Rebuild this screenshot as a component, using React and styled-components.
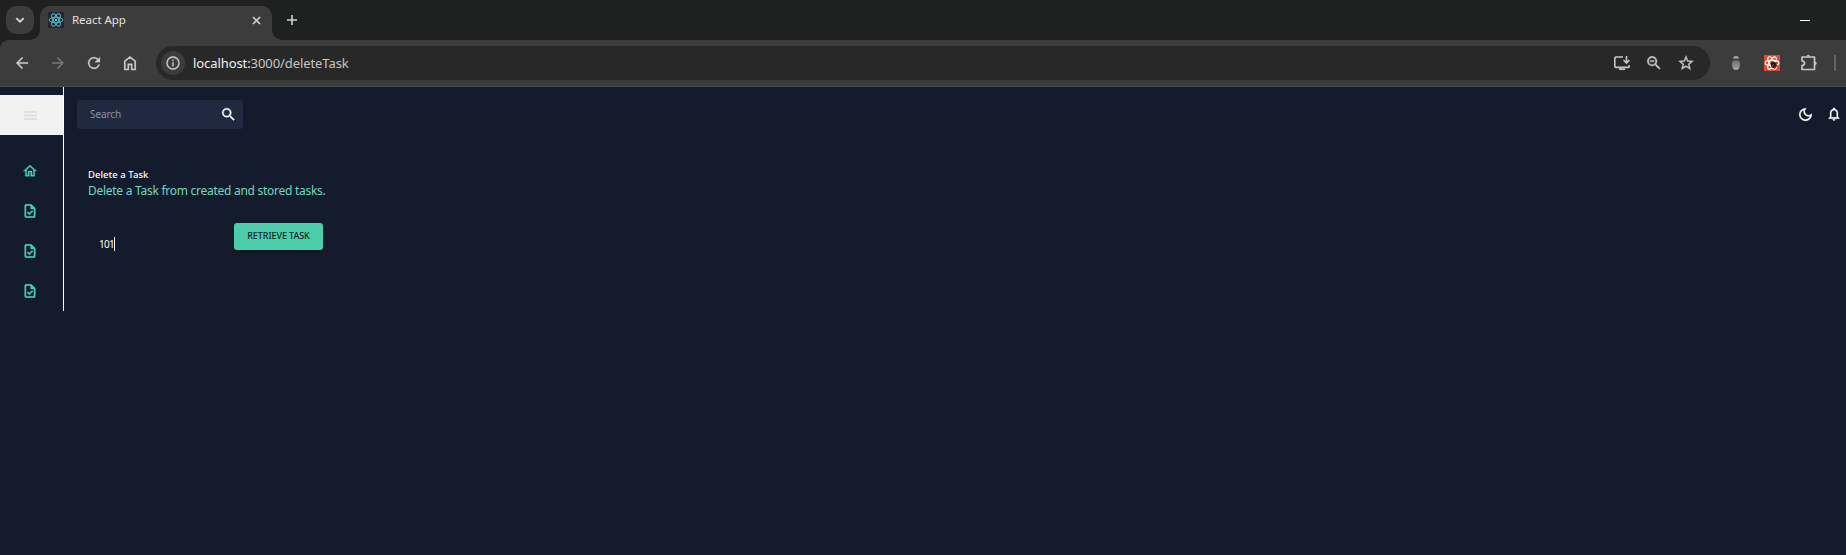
import React from 'react';
import styled, { createGlobalStyle } from 'styled-components';

const Global = createGlobalStyle`
  *, *::before, *::after { box-sizing: border-box; }
  html, body { margin: 0; background: #141b2d; }
  body { font-family: "Noto Sans", "Open Sans", sans-serif; overflow: hidden; }
  svg { display: block; flex: none; }
`;

const Window = styled.div`
  width: 1846px;
  height: 555px;
  display: flex;
  flex-direction: column;
  background: #141b2d;
`;

const TabStrip = styled.header`
  height: 40px;
  flex: none;
  display: flex;
  align-items: flex-start;
  padding: 6px 36px 0 6px;
  background: #1f2120;
`;

const TabSearch = styled.div`
  width: 28px;
  height: 28px;
  border-radius: 10px;
  background: #3c3c3c;
  display: grid;
  place-items: center;
  color: #e3e3e3;
`;

const Tab = styled.div`
  position: relative;
  width: 232px;
  height: 34px;
  margin-left: 6px;
  padding: 0 9px 6px 8px;
  display: flex;
  align-items: center;
  border-radius: 10px 10px 0 0;
  background: #3c3c3c;
  color: #e3e3e3;
  &::before, &::after {
    content: "";
    position: absolute;
    bottom: 0;
    width: 10px;
    height: 10px;
  }
  &::before { left: -10px; background: radial-gradient(circle at 0 0, transparent 9.5px, #3c3c3c 10px); }
  &::after { right: -10px; background: radial-gradient(circle at 100% 0, transparent 9.5px, #3c3c3c 10px); }
`;

const TabTitle = styled.span`
  flex: 1;
  margin-left: 8px;
  font-size: 11.5px;
  line-height: 16px;
  letter-spacing: -0.05px;
`;

const NewTab = styled.div`
  margin: 8px 0 0 14px;
  color: #d0d0d0;
`;

const Minimize = styled.div`
  width: 10px;
  height: 1px;
  margin: 14px 0 0 auto;
  background: #fff;
`;

const Toolbar = styled.nav`
  height: 47px;
  flex: none;
  display: flex;
  align-items: center;
  padding: 0 9px 1px 13px;
  background:
    radial-gradient(circle at 100% 100%, #3c3c3c 7.5px, #1f2120 8px) 0 0 / 8px 8px no-repeat,
    #3c3c3c;
  border-bottom: 1px solid #4a4a4a;
`;

const NavButtons = styled.div`
  display: flex;
  gap: 18px;
  color: #c7c7c7;
`;

const Omnibox = styled.div`
  width: 1554px;
  height: 34px;
  margin-left: 17px;
  padding: 0 15px 0 5px;
  display: flex;
  align-items: center;
  border-radius: 17px;
  background: #282828;
  color: #c7c7c7;
`;

const SiteInfo = styled.div`
  width: 24px;
  height: 24px;
  border-radius: 50%;
  background: #3c3c3c;
  display: grid;
  place-items: center;
`;

const Url = styled.span`
  flex: 1;
  margin-left: 8px;
  font-size: 13px;
  line-height: 20px;
  letter-spacing: -0.08px;
  color: #c7c7c7;
  b { font-weight: 400; color: #f0f0f0; }
`;

const OmniActions = styled.div`
  display: flex;
  gap: 14px;
`;

const Extensions = styled.div`
  flex: 1;
  margin-left: 17px;
  display: flex;
  align-items: center;
  color: #c7c7c7;
`;

const ExtensionIcon = styled.div`
  margin-right: ${(p) => p.$after}px;
`;

const Divider = styled.div`
  width: 2px;
  height: 16px;
  background: #626262;
`;

const Page = styled.div`
  flex: 1;
  display: flex;
  align-items: flex-start;
`;

const Sidebar = styled.aside`
  width: 64px;
  height: 224px;
  padding-top: 8px;
  border-right: 1px solid #fff;
`;

const MenuToggle = styled.div`
  height: 40px;
  padding-left: 22px;
  display: flex;
  align-items: center;
  background: #f2f2f2;
  color: #dcdcdc;
`;

const SideLinks = styled.div`
  display: flex;
  flex-direction: column;
  padding-top: 16px;
`;

const SideLink = styled.div`
  width: 60px;
  height: 40px;
  padding-bottom: 1px;
  display: flex;
  align-items: center;
  justify-content: center;
  color: #4cceac;
`;

const Main = styled.main`
  flex: 1;
  display: flex;
  flex-direction: column;
`;

const Topbar = styled.div`
  display: flex;
  align-items: center;
  justify-content: space-between;
  padding: 13px 4px 0 13px;
`;

const SearchBox = styled.div`
  width: 166px;
  height: 29px;
  padding: 0 6px 1px 13px;
  display: flex;
  align-items: center;
  justify-content: space-between;
  border-radius: 3px;
  background: #1f2a40;
  color: #fff;
`;

const Placeholder = styled.span`
  font-size: 10px;
  letter-spacing: -0.1px;
  color: #8c929d;
`;

const TopIcons = styled.div`
  display: flex;
  gap: 12px;
  padding-bottom: 1px;
  color: #fff;
`;

const Content = styled.section`
  padding: 38px 0 0 24px;
`;

const Title = styled.h2`
  margin: 0;
  font-size: 9.5px;
  line-height: 16px;
  font-weight: 500;
  letter-spacing: 0.05px;
  color: #fff;
`;

const Subtitle = styled.p`
  margin: 0;
  font-size: 12px;
  line-height: 16px;
  letter-spacing: -0.27px;
  color: #70d8bd;
`;

const Form = styled.div`
  display: flex;
  margin-top: 24px;
`;

const TaskField = styled.div`
  width: 146px;
  height: 41px;
  padding: 14px 0 0 11px;
  display: flex;
  font-size: 10px;
  line-height: 14px;
  letter-spacing: -0.7px;
  color: #fff;
`;

const Caret = styled.span`
  width: 1px;
  height: 14px;
  background: #fff;
`;

const RetrieveButton = styled.button`
  width: 89px;
  height: 27px;
  padding: 0 0 2px;
  border: 0;
  border-radius: 3px;
  background: #4cceac;
  color: #10231f;
  font: 500 9px/25px "Noto Sans", sans-serif;
  letter-spacing: -0.08px;
  white-space: nowrap;
  box-shadow: 0 2px 3px rgba(0, 0, 0, .25);
`;

const icons = {
  chevron: 'M7.41 8.59 12 13.17l4.59-4.58L18 10l-6 6-6-6z',
  close: 'M19 6.41 17.59 5 12 10.59 6.41 5 5 6.41 10.59 12 5 17.59 6.41 19 12 13.41 17.59 19 19 17.59 13.41 12z',
  back: 'M20 11H7.83l5.59-5.59L12 4l-8 8 8 8 1.41-1.41L7.83 13H20z',
  forward: 'm12 4-1.41 1.41L16.17 11H4v2h12.17l-5.58 5.59L12 20l8-8z',
  reload: 'M17.65 6.35A8 8 0 1 0 19.73 14h-2.08A6 6 0 1 1 12 6c1.66 0 3.14.69 4.22 1.78L13 11h7V4z',
  info: 'M11 7h2v2h-2zm0 4h2v6h-2zm1-9a10 10 0 1 0 0 20 10 10 0 0 0 0-20zm0 18a8 8 0 1 1 0-16 8 8 0 0 1 0 16z',
  star: 'm22 9.24-7.19-.62L12 2 9.19 8.63 2 9.24l5.46 4.73L5.82 21 12 17.27 18.18 21l-1.63-7.03zM12 15.4l-3.76 2.27 1-4.28-3.32-2.88 4.38-.38L12 6.1l1.71 4.04 4.38.38-3.32 2.88 1 4.28z',
  search: 'M15.5 14h-.79l-.28-.27A6.47 6.47 0 0 0 16 9.5 6.5 6.5 0 1 0 9.5 16c1.61 0 3.09-.59 4.23-1.57l.27.28v.79l5 4.99L20.49 19zm-6 0a4.5 4.5 0 1 1 0-9 4.5 4.5 0 0 1 0 9z',
  zoomOut: 'M15.5 14h-.79l-.28-.27A6.47 6.47 0 0 0 16 9.5 6.5 6.5 0 1 0 9.5 16c1.61 0 3.09-.59 4.23-1.57l.27.28v.79l5 4.99L20.49 19zm-6 0a4.5 4.5 0 1 1 0-9 4.5 4.5 0 0 1 0 9zM7 8.7h5v1.6H7z',
  menu: 'M3 18h18v-2H3zm0-5h18v-2H3zm0-7v2h18V6z',
  home: 'm12 5.69 5 4.5V18h-2v-6H9v6H7v-7.81zM12 3 2 12h3v8h6v-6h2v6h6v-8h3z',
  task: 'M14 2H6c-1.1 0-2 .9-2 2v16c0 1.1.9 2 2 2h12c1.1 0 2-.9 2-2V8zm4 18H6V4h7v5h5zm-9.18-6.95L7.4 14.46 10.94 18l5.66-5.66-1.41-1.41-4.24 4.24z',
  moon: 'M9.37 5.51A7.35 7.35 0 0 0 9.1 7.5c0 4.08 3.32 7.4 7.4 7.4.68 0 1.35-.09 1.99-.27C17.45 17.19 14.93 19 12 19c-3.86 0-7-3.14-7-7 0-2.93 1.81-5.45 4.37-6.49zM12 3a9 9 0 1 0 9 9c0-.46-.04-.92-.1-1.36A5.39 5.39 0 0 1 16.5 12.9a5.4 5.4 0 0 1-3.14-9.8C12.92 3.04 12.46 3 12 3z',
  bell: 'M12 22c1.1 0 2-.9 2-2h-4c0 1.1.9 2 2 2zm6-6v-5c0-3.07-1.63-5.64-4.5-6.32V4a1.5 1.5 0 0 0-3 0v.68C7.64 5.36 6 7.92 6 11v5l-2 2v1h16v-1zm-2 1H8v-6c0-2.48 1.51-4.5 4-4.5s4 2.02 4 4.5z',
};

const Icon = ({ name, size = 18, weight = 0 }) => (
  <svg width={size} height={size} viewBox="0 0 24 24" fill="currentColor" stroke="currentColor" strokeWidth={weight}>
    <path d={icons[name]} />
  </svg>
);

const Atom = ({ size, color, scale = 1 }) => (
  <g fill="none" stroke={color} strokeWidth={scale} transform={`translate(${size / 2} ${size / 2})`}>
    {[0, 60, 120].map((a) => <ellipse key={a} rx={size * 0.43} ry={size * 0.17} transform={`rotate(${a})`} />)}
    <circle r="1.2" fill={color} stroke="none" />
  </g>
);

export default function App() {
  return (
    <Window>
      <Global />
      <TabStrip>
        <TabSearch><Icon name="chevron" size={16} weight={0.7} /></TabSearch>
        <Tab>
          <svg width="16" height="16"><rect width="16" height="16" rx="1" fill="#20262c" /><Atom size={16} color="#55bcd6" /></svg>
          <TabTitle>React App</TabTitle>
          <Icon name="close" size={13} weight={0.8} />
        </Tab>
        <NewTab><svg width="12" height="12" stroke="currentColor" strokeWidth="1.6"><path d="M1 6h10M6 1v10" /></svg></NewTab>
        <Minimize />
      </TabStrip>
      <Toolbar>
        <NavButtons>
          <Icon name="back" weight={0.3} />
          <svg width="18" height="18" viewBox="0 0 24 24" fill="#777"><path d={icons.forward} /></svg>
          <Icon name="reload" weight={0.3} />
          <svg width="18" height="18" fill="none" stroke="currentColor" strokeWidth="1.7"><path d="M3.8 7.2 9 3l5.200 4.200v8.300h-3.500v-5.200H7.300v5.200H3.800z" /></svg>
        </NavButtons>
        <Omnibox>
          <SiteInfo><Icon name="info" size={16} weight={0.3} /></SiteInfo>
          <Url><b>localhost:</b>3000/deleteTask</Url>
          <OmniActions>
            <svg width="18" height="18" fill="none" stroke="currentColor" strokeWidth="1.6"><path d="M10 3H3q-1.200 0-1.200 1.200v8q0 1.200 1.200 1.200h12q1.200 0 1.200-1.200V11M13.500 2v6.500M10.500 6l3 3 3-3M6 15.200h6" /></svg>
            <Icon name="zoomOut" weight={0.5} />
            <Icon name="star" weight={0.4} />
          </OmniActions>
        </Omnibox>
        <Extensions>
          <ExtensionIcon $after={19}>
            <svg width="18" height="18">
              <defs><linearGradient id="acorn" x2="0" y2="1"><stop stopColor="#6c6c6c" /><stop offset="1" stopColor="#aaa" /></linearGradient></defs>
              <path d="M6.200 4.500q0-2.500 2.800-2.500t2.800 2.500z" fill="#aaa" /><path d="M5.200 8q0-1.500 1.500-1.500h4.600q1.500 0 1.500 1.500v3q0 5-3.800 5t-3.800-5z" fill="url(#acorn)" />
            </svg>
          </ExtensionIcon>
          <ExtensionIcon $after={20}>
            <svg width="16" height="16">
              <rect width="16" height="16" fill="#df4b38" /><Atom size={16} color="#fff" scale={1.1} />
              <path d="m6.500 8 2-1.500 3.500 1 1 3.500-2 2.500-3.500-1z" fill="#321512" /><path d="m8 12 2-3m0 5 2-3" stroke="#df4b38" strokeWidth=".6" />
            </svg>
          </ExtensionIcon>
          <ExtensionIcon $after={16}>
            <svg width="18" height="18" fill="none" stroke="currentColor" strokeWidth="1.7">
              <path d="M2 3h12.500v12.500H2v-4q2.500-.2 2.500-2.300T2 7z" strokeLinejoin="round" /><path d="M6.500 2.500a1.700 1.700 0 0 1 3.400 0zM15 7.500a1.700 1.700 0 0 1 0 3.400z" fill="currentColor" stroke="none" />
            </svg>
          </ExtensionIcon>
          <Divider />
        </Extensions>
      </Toolbar>
      <Page>
        <Sidebar>
          <MenuToggle><Icon name="menu" size={17} weight={0.3} /></MenuToggle>
          <SideLinks>
            {['home', 'task', 'task', 'task'].map((name, i) => <SideLink key={i}><Icon name={name} size={16} weight={0.5} /></SideLink>)}
          </SideLinks>
        </Sidebar>
        <Main>
          <Topbar>
            <SearchBox><Placeholder>Search</Placeholder><Icon name="search" size={17} weight={0.5} /></SearchBox>
            <TopIcons><Icon name="moon" size={17} weight={0.3} /><Icon name="bell" size={16} weight={0.3} /></TopIcons>
          </Topbar>
          <Content>
            <Title>Delete a Task</Title>
            <Subtitle>Delete a Task from created and stored tasks.</Subtitle>
            <Form>
              <TaskField>101<Caret /></TaskField>
              <RetrieveButton>RETRIEVE TASK</RetrieveButton>
            </Form>
          </Content>
        </Main>
      </Page>
    </Window>
  );
}
